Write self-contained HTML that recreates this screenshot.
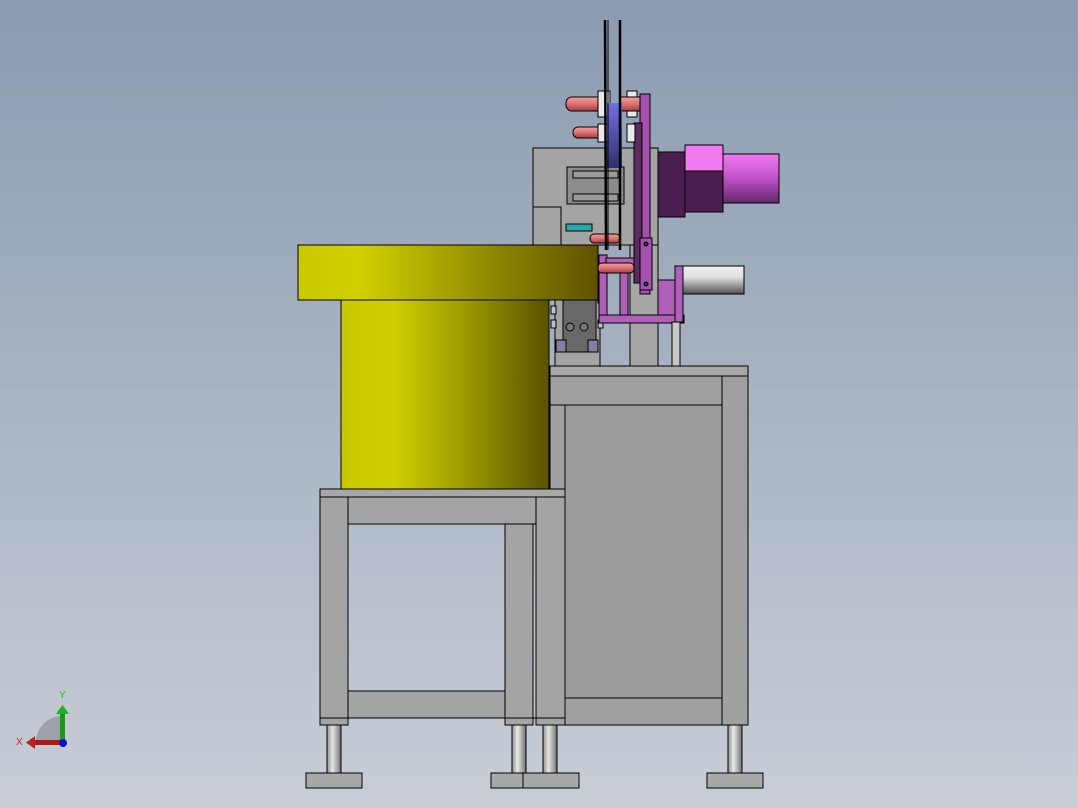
<!DOCTYPE html>
<html><head><meta charset="utf-8"><style>
html,body{margin:0;padding:0;width:1078px;height:808px;overflow:hidden}
</style></head><body>
<svg width="1078" height="808" viewBox="0 0 1078 808" xmlns="http://www.w3.org/2000/svg" style="display:block;font-family:'Liberation Sans',sans-serif">
<defs>
<linearGradient id="bg" x1="0" y1="0" x2="0" y2="1"><stop offset="0" stop-color="#8a9bb0"/><stop offset="1" stop-color="#c9ced6"/></linearGradient>
<linearGradient id="yel" x1="0" y1="0" x2="1" y2="0"><stop offset="0" stop-color="#c8c800"/><stop offset="0.25" stop-color="#d0d000"/><stop offset="0.6" stop-color="#9a9a00"/><stop offset="1" stop-color="#5a5200"/></linearGradient>
<linearGradient id="yel2" x1="0" y1="0" x2="1" y2="0"><stop offset="0" stop-color="#c8c800"/><stop offset="0.2" stop-color="#d2d200"/><stop offset="0.65" stop-color="#8e8800"/><stop offset="1" stop-color="#5e5200"/></linearGradient>
<linearGradient id="silv" x1="0" y1="0" x2="0" y2="1"><stop offset="0" stop-color="#f2f2f2"/><stop offset="0.4" stop-color="#e0e0e0"/><stop offset="1" stop-color="#505050"/></linearGradient>
<linearGradient id="mag" x1="0" y1="0" x2="0" y2="1"><stop offset="0" stop-color="#f07af0"/><stop offset="0.5" stop-color="#c050c8"/><stop offset="1" stop-color="#602a68"/></linearGradient>
<linearGradient id="pink" x1="0" y1="0" x2="0" y2="1"><stop offset="0" stop-color="#f0a0a0"/><stop offset="0.5" stop-color="#e07070"/><stop offset="1" stop-color="#a04040"/></linearGradient>
<linearGradient id="leg" x1="0" y1="0" x2="1" y2="0"><stop offset="0" stop-color="#909090"/><stop offset="0.4" stop-color="#e8e8e8"/><stop offset="1" stop-color="#707070"/></linearGradient>
<linearGradient id="blue" x1="0" y1="0" x2="0" y2="1"><stop offset="0" stop-color="#7070e0"/><stop offset="1" stop-color="#303070"/></linearGradient>
</defs>
<rect width="1078" height="808" fill="url(#bg)"/>
<g stroke="#000" stroke-width="1">
<rect x="327" y="725" width="14" height="50" fill="url(#leg)"/>
<rect x="512" y="725" width="14" height="50" fill="url(#leg)"/>
<rect x="543" y="725" width="14" height="50" fill="url(#leg)"/>
<rect x="728" y="725" width="14" height="50" fill="url(#leg)"/>
<rect x="306" y="773" width="56" height="15" fill="#a8a8a8"/>
<rect x="491" y="773" width="56" height="15" fill="#a8a8a8"/>
<rect x="523" y="773" width="56" height="15" fill="#a8a8a8"/>
<rect x="707" y="773" width="56" height="15" fill="#a8a8a8"/>
<rect x="550" y="376" width="198" height="349" fill="#a0a0a0"/>
<rect x="550" y="366" width="198" height="10" fill="#a8a8a8"/>
<rect x="565" y="405" width="157" height="293" fill="#9c9c9c"/>
<line x1="550" y1="405" x2="722" y2="405"/>
<line x1="722" y1="376" x2="722" y2="725"/>
<line x1="550" y1="698" x2="722" y2="698"/>
<rect x="320" y="489" width="245" height="8" fill="#a8a8a8"/>
<rect x="320" y="497" width="28" height="228" fill="#a4a4a4"/>
<rect x="536" y="497" width="29" height="228" fill="#a4a4a4"/>
<rect x="348" y="497" width="188" height="27" fill="#a4a4a4"/>
<rect x="505" y="524" width="28" height="201" fill="#a4a4a4"/>
<rect x="348" y="691" width="157" height="27" fill="#a4a4a4"/>
<line x1="320" y1="718" x2="565" y2="718"/>
<rect x="630" y="150" width="28" height="216" fill="#a6a6a6"/>
<rect x="533" y="148" width="125" height="97" fill="#a4a4a4"/>
<rect x="567" y="167" width="57" height="37" fill="#8c8c8c"/>
<rect x="573" y="171" width="45" height="7" fill="#9a9a9a"/>
<rect x="573" y="194" width="45" height="7" fill="#9a9a9a"/>
<rect x="533" y="207" width="28" height="38" fill="#a4a4a4"/>
<rect x="555" y="300" width="45" height="66" fill="#a4a4a4"/>
<rect x="563" y="300" width="33" height="52" fill="#686868"/>
<circle cx="570" cy="327" r="4" fill="#777"/><circle cx="584" cy="327" r="4" fill="#777"/>
<rect x="556" y="340" width="10" height="12" fill="#8080a0"/><rect x="588" y="340" width="10" height="12" fill="#8080a0"/>
<rect x="551" y="306" width="5" height="8" fill="#c0c0c8"/><rect x="551" y="320" width="5" height="8" fill="#c0c0c8"/>
<rect x="598" y="295" width="5" height="8" fill="#c0c0c8"/><rect x="598" y="320" width="5" height="8" fill="#c0c0c8"/>
<rect x="566" y="224" width="26" height="7" fill="#2aa8a8"/>
<!-- magenta frame -->
<rect x="599" y="255" width="8" height="68" fill="#b060b8"/>
<rect x="620" y="265" width="8" height="58" fill="#b060b8"/>
<rect x="599" y="315" width="85" height="8" fill="#b060b8"/>
<rect x="606" y="258" width="30" height="12" fill="#b060b8"/>
<rect x="640" y="94" width="10" height="200" fill="#a850b0"/>
<rect x="634" y="123" width="8" height="160" fill="#5a2a60"/>
<rect x="658" y="152" width="27" height="65" fill="#4a1f50"/>
<rect x="685" y="145" width="38" height="67" fill="#4a1f50"/>
<rect x="685" y="145" width="38" height="26" fill="#f07af0"/>
<rect x="723" y="154" width="56" height="49" fill="url(#mag)"/>
<rect x="640" y="238" width="12" height="52" fill="#a850b0"/>
<circle cx="646" cy="244" r="2" fill="#333"/><circle cx="646" cy="284" r="2" fill="#333"/>
<rect x="658" y="280" width="18" height="35" fill="#b060b8"/>
<rect x="675" y="266" width="8" height="56" fill="#b060b8"/>
<rect x="672" y="322" width="8" height="44" fill="#c8c8c8"/>
<rect x="683" y="266" width="61" height="28" fill="url(#silv)"/>
<rect x="566" y="97" width="40" height="14" rx="6" fill="url(#pink)"/>
<rect x="573" y="127" width="33" height="11" rx="5" fill="url(#pink)"/>
<rect x="598" y="91" width="12" height="26" fill="#e8e8e8"/>
<rect x="598" y="124" width="12" height="18" fill="#e8e8e8"/>
<rect x="627" y="91" width="10" height="26" fill="#e8e8e8"/>
<rect x="627" y="124" width="8" height="18" fill="#e8e8e8"/>
<rect x="620" y="97" width="20" height="14" fill="url(#pink)"/>
<rect x="598" y="263" width="36" height="10" rx="4" fill="url(#pink)"/>
<rect x="590" y="234" width="30" height="9" rx="4" fill="url(#pink)"/>
<rect x="607" y="103" width="15" height="65" fill="url(#blue)" stroke="none"/>
<line x1="605" y1="20" x2="606" y2="250" stroke-width="2.5"/>
<line x1="608" y1="20" x2="608" y2="250" stroke-width="1"/>
<line x1="620" y1="20" x2="620" y2="250" stroke-width="2.5"/>
<rect x="341" y="300" width="208" height="189" fill="url(#yel)"/>
<rect x="298" y="245" width="300" height="55" fill="url(#yel2)"/>
</g>
<path d="M36 742 A26 26 0 0 1 62 716 L62 742 Z" fill="#9ea2a8"/>
<rect x="60" y="713" width="5" height="30" fill="#1a9a1a"/>
<polygon points="56,714 62.5,705 69,714" fill="#20b020"/>
<rect x="34" y="740" width="28" height="5" fill="#b01818"/>
<polygon points="35,736 26,742.5 35,749" fill="#c02020"/>
<circle cx="63" cy="743" r="4" fill="#1010d0"/>
<text x="59" y="698" font-size="10" fill="#20c020">Y</text>
<text x="16" y="745" font-size="10" fill="#d02020">X</text>
</svg>
</body></html>
